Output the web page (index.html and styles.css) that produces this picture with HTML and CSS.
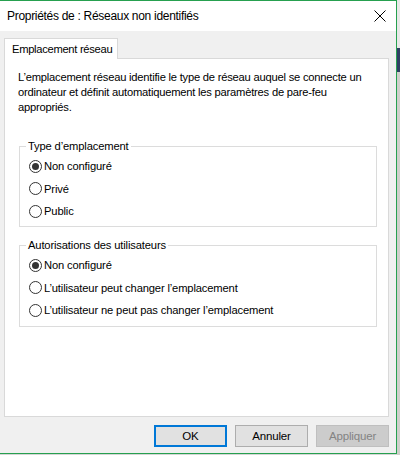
FILE: index.html
```html
<!DOCTYPE html>
<html lang="fr">
<head>
<meta charset="utf-8">
<title>Propriétés de : Réseaux non identifiés</title>
<link rel="stylesheet" href="styles.css">
</head>
<body>
<div class="desk">
  <div class="window">
    <div class="titlebar">
      <span class="title">Propriétés de : Réseaux non identifiés</span>
      <svg class="close" width="12" height="12" viewBox="0 0 12 12"><path d="M0.5 0.5 L11.5 11.5 M11.5 0.5 L0.5 11.5" stroke="#000" stroke-width="1" fill="none"/></svg>
    </div>
    <div class="client">
      <div class="tabs">
        <div class="tab">Emplacement réseau</div>
      </div>
      <div class="panel">
        <p class="desc">L’emplacement réseau identifie le type de réseau auquel se connecte un<br>ordinateur et définit automatiquement les paramètres de pare-feu<br>appropriés.</p>
        <fieldset class="group g1">
          <legend>Type d’emplacement</legend>
          <div class="opt"><span class="radio checked"></span>Non configuré</div>
          <div class="opt"><span class="radio"></span>Privé</div>
          <div class="opt"><span class="radio"></span>Public</div>
        </fieldset>
        <fieldset class="group g2">
          <legend>Autorisations des utilisateurs</legend>
          <div class="opt"><span class="radio checked"></span>Non configuré</div>
          <div class="opt"><span class="radio"></span>L’utilisateur peut changer l’emplacement</div>
          <div class="opt"><span class="radio"></span>L’utilisateur ne peut pas changer l’emplacement</div>
        </fieldset>
      </div>
      <div class="buttons">
        <button class="btn default">OK</button>
        <button class="btn">Annuler</button>
        <button class="btn disabled">Appliquer</button>
      </div>
    </div>
  </div>
  <div class="edge">
    <div class="e1"></div><div class="e2"></div><div class="e3"></div>
  </div>
</div>
</body>
</html>
```
FILE: styles.css
```css
html, body {
  margin: 0;
  padding: 0;
  background: #d6d6d6;
}
body {
  font-family: "Liberation Sans", Arial, sans-serif;
  font-size: 11.2px;
  letter-spacing: -0.15px;
  color: #000;
}
.desk {
  display: flex;
  width: 400px;
  height: 455px;
  overflow: hidden;
}
.window {
  width: 397px;
  height: 454px;
  box-sizing: border-box;
  border: 1px solid #26a04f;
  border-left: none;
  display: flex;
  flex-direction: column;
  flex: none;
}
.edge {
  flex: 1;
  display: flex;
  flex-direction: column;
}
.e1 { height: 48px; background: #e8e8e8; }
.e2 { height: 24px; background: #2f3f63; }
.e3 { flex: 1; background: #cfcfcb; }
.titlebar {
  height: 30px;
  background: #fff;
  display: flex;
  align-items: center;
  justify-content: space-between;
  padding: 0 10px 0 7px;
  flex: none;
}
.title {
  font-size: 12px;
  letter-spacing: -0.3px;
  line-height: 16px;
  padding-bottom: 1px;
}
.close {
  display: block;
  margin-bottom: 1px;
}
.client {
  flex: 1;
  background: #f0f0f0;
  display: flex;
  flex-direction: column;
  padding: 7px 0 0 4px;
}
.tabs {
  display: flex;
  height: 20px;
}
.tab {
  flex: 0 0 114px;
  background: #fff;
  border: 1px solid #d9d9d9;
  border-bottom: none;
  height: 21px;
  box-sizing: border-box;
  padding: 3px 0 0 7px;
  line-height: 15px;
  position: relative;
  z-index: 1;
  width: 114px;
  white-space: nowrap;
  overflow: hidden;
  letter-spacing: -0.3px;
}
.panel {
  width: 385px;
  height: 359px;
  box-sizing: border-box;
  background: #fff;
  border: 1px solid #d9d9d9;
  padding: 11px 11px 0 13px;
}
.desc {
  margin: 0;
  line-height: 15px;
  white-space: nowrap;
  letter-spacing: -0.22px;
}
.group {
  margin: 0;
  padding: 0 0 0 9px;
  border: 1px solid #dcdcdc;
  min-width: 0;
}
.group legend {
  padding: 0 2px;
  margin-left: -3px;
  line-height: 15px;
}
.g1 {
  margin: 24px 0 0 1px;
  height: 88px;
  box-sizing: border-box;
}
.g2 {
  margin: 11px 0 0 1px;
  height: 89px;
  box-sizing: border-box;
}
.opt {
  display: flex;
  align-items: center;
  height: 22.5px;
  white-space: nowrap;
}
.g1 .opt:first-of-type, .g2 .opt:first-of-type {
  margin-top: 1px;
}
.radio {
  width: 13px;
  height: 13px;
  box-sizing: border-box;
  border: 1px solid #333;
  border-radius: 50%;
  margin-right: 2px;
  display: flex;
  align-items: center;
  justify-content: center;
  flex: none;
}
.radio.checked::after {
  content: "";
  width: 7px;
  height: 7px;
  border-radius: 50%;
  background: #333;
}
.buttons {
  display: flex;
  justify-content: flex-end;
  gap: 8px;
  padding: 8px 7px 0 0;
}
.btn {
  width: 73px;
  height: 22px;
  box-sizing: border-box;
  font-family: inherit;
  font-size: 11.5px;
  letter-spacing: -0.15px;
  background: #e1e1e1;
  border: 1px solid #adadad;
  color: #000;
  padding: 0;
  margin: 0;
  line-height: 18px;
}
.btn.default {
  border: 2px solid #0078d7;
}
.btn.disabled {
  background: #cccccc;
  border-color: #bfbfbf;
  color: #838383;
}
```
